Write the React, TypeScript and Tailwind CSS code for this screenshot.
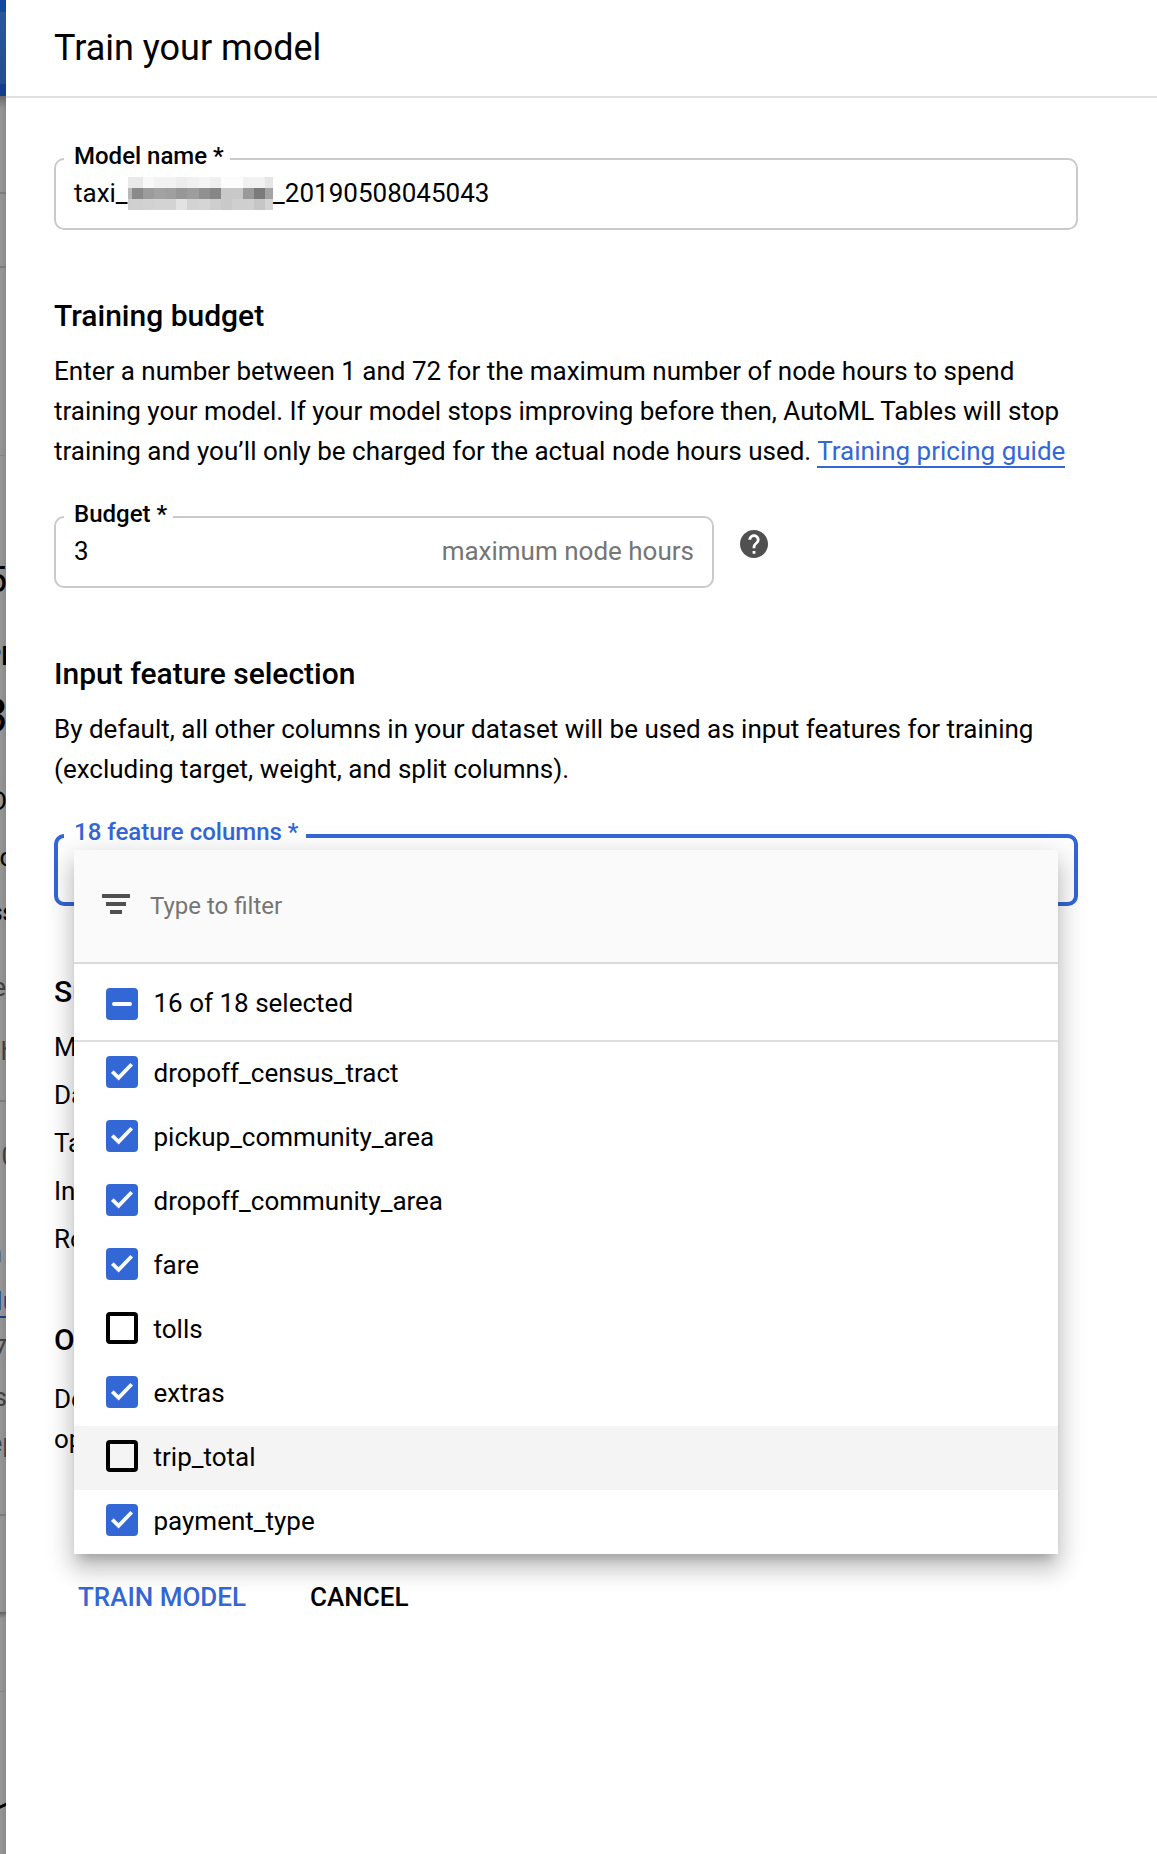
import type { ReactNode } from "react";

const features = [
  { name: "dropoff_census_tract", checked: true },
  { name: "pickup_community_area", checked: true },
  { name: "dropoff_community_area", checked: true },
  { name: "fare", checked: true },
  { name: "tolls", checked: false },
  { name: "extras", checked: true },
  { name: "trip_total", checked: false, hover: true },
  { name: "payment_type", checked: true },
];

const mosaicWidths = [4, 11, 11, 11, 11, 11, 12, 11, 11, 11, 11, 11, 11, 8];
const mosaic = [
  ["e9", "e9", "f8", "f2", "f2", "ec", "f0", "f4", "ef", "fc", "fc", "f1", "f1", "e6"],
  ["b8", "8a", "9b", "a2", "9f", "97", "9d", "90", "86", "c8", "c8", "9a", "7b", "a3"],
  ["cf", "d0", "d2", "d3", "d3", "e2", "d3", "d5", "ce", "c9", "cf", "cf", "c6", "d4"],
];

// Pieces of the dimmed page that stay visible left of the panel.
const glyphs = [
  { t: "5", right: -1, base: 592, cls: "text-[36px]" },
  { t: "Pl", right: -2, base: 665, cls: "text-[26px] font-medium" },
  { t: "3", right: -2, base: 732, cls: "text-[48px]" },
  { t: "D", right: -1, base: 810, cls: "text-[26px]" },
  { t: "c", right: -7, base: 866, cls: "text-[26px]" },
  { t: "ss", right: -10, base: 921, cls: "text-[26px] font-medium" },
  { t: "e", right: 0, base: 996, cls: "text-[26px] text-[#404040]" },
  { t: "h", right: -9, base: 1060, cls: "text-[26px] text-[#404040]" },
  { t: "0", right: -10, base: 1165, cls: "text-[26px] text-[#404040]" },
  { t: "n", right: 4, base: 1262, cls: "text-[26px] text-[#404040]" },
  { t: "lu", right: -11, base: 1310, cls: "text-[26px] text-[#1e3f85]" },
  { t: "7", right: -1, base: 1358, cls: "text-[26px] text-[#404040]" },
  { t: "s", right: -1, base: 1406, cls: "text-[26px] text-[#404040]" },
  { t: "ep", right: -11, base: 1452, cls: "text-[26px] text-[#404040]" },
];

function PageSliver() {
  return (
    <div className="relative w-[6px] shrink-0 overflow-hidden bg-linear-to-r from-[#969696] to-[#8a8a8a]">
      <div className="h-3 bg-[#0f4a9c]" />
      <div className="h-[72px] bg-linear-to-b from-[#28579a] to-[#254f8c]" />
      <div className="h-3 bg-[#123f88]" />
      <div className="h-3 bg-linear-to-b from-[#686868] to-[#909090]/0" />
      <div className="mt-[84px] h-[2px] bg-[#7c7c7c]" />
      <div className="mt-[72px] h-[2px] bg-[#7c7c7c]" />
      <div className="mt-[187px] h-px bg-[#858585]" />
      <div className="mt-[644px] h-[2px] bg-[#7c7c7c]" />
      <div className="mt-[214px] h-[2px] bg-[#1e3f85]" />
      <div className="mt-[196px] h-[2px] bg-[#7c7c7c]" />
      <div className="mt-[96px] h-[6px] bg-linear-to-b from-[#606060] to-[#909090]" />
      <div className="mt-[73px] h-px bg-[#858585]" />
      <svg className="mt-[110px] h-[8px] w-[6px]" viewBox="0 0 6 8">
        <path d="M-1 5.5 7 2" stroke="#000" strokeWidth="3" />
      </svg>
      {glyphs.map((g) => (
        <span
          key={g.base}
          className={"absolute leading-none whitespace-nowrap " + g.cls}
          style={{ right: g.right, bottom: 1854 - g.base, transform: "translateY(16%)" }}
        >
          {g.t}
        </span>
      ))}
    </div>
  );
}

function Label({ children, className }: { children: ReactNode; className: string }) {
  return (
    <span className={"absolute left-[10px] z-10 h-7 bg-white pl-[10px] text-[24px] leading-7 font-medium whitespace-nowrap " + className}>
      {children}
    </span>
  );
}

function Checkbox({ state }: { state: "on" | "off" | "mixed" }) {
  if (state === "off") return <span className="size-8 shrink-0 rounded-[4px] border-4 border-black" />;
  return (
    <svg className="size-8 shrink-0 rounded-[4px] bg-[#3367d6]" viewBox="0 0 32 32" fill="none" stroke="#fafafa">
      {state === "on" ? (
        <path d="M6.3 15.7 12.6 21.8 25.7 8.2" strokeWidth="3.8" />
      ) : (
        <path d="M8 16H24" strokeWidth="4" strokeLinecap="round" />
      )}
    </svg>
  );
}

function FeatureMenu() {
  return (
    <div className="absolute top-3 left-4 z-20 h-[704px] w-[984px] bg-white shadow-[0_10px_10px_-6px_rgba(0,0,0,0.2),0_16px_20px_2px_rgba(0,0,0,0.14),0_6px_28px_4px_rgba(0,0,0,0.12)]">
      <div className="flex h-[114px] items-start border-b-2 border-[#dadada] bg-[#fafafa] pl-7">
        <svg className="mt-11 h-5 w-7" viewBox="0 0 28 20" fill="#505050">
          <path d="M0 0h28v4H0zM4 8h20v4H4zM8 16h12v4H8z" />
        </svg>
        <span className="mt-[42px] ml-5 text-[24px] leading-7 text-[#757575]">Type to filter</span>
      </div>
      <div className="flex h-[78px] border-b-2 border-[#dfdfdf] pt-6 pl-8">
        <Checkbox state="mixed" />
        <span className="-mt-[5px] ml-[15.5px] leading-10">16 of 18 selected</span>
      </div>
      {features.map((f) => (
        <div key={f.name} className={"flex h-16 pt-[14px] pl-8 " + (f.hover ? "bg-[#f4f4f4]" : "")}>
          <Checkbox state={f.checked ? "on" : "off"} />
          <span className="-mt-[3px] ml-[15.5px] leading-10">{f.name}</span>
        </div>
      ))}
    </div>
  );
}

function Heading({ children, className }: { children: ReactNode; className: string }) {
  return <h2 className={"h-10 text-[30px] leading-10 font-medium " + className}>{children}</h2>;
}

export default function App() {
  return (
    <div className="flex h-[1854px] w-[1157px] overflow-hidden bg-white font-[Roboto,sans-serif] text-[26px] text-black">
      <PageSliver />
      <main className="flex-1">
        <header className="h-[98px] border-b-2 border-[#e0e0e0] pt-7 pl-12">
          <h1 className="text-[36px] leading-10">Train your model</h1>
        </header>
        <div className="w-[1072px] pt-[60px] pl-12">
          <div className="relative flex h-[72px] rounded-[10px] border-2 border-[#cacaca] pt-[13px] pl-[18px] leading-10">
            <Label className="-top-[18px] -ml-[2px] w-[166px]">Model name *</Label>
            <span>taxi_</span>
            <div className="mt-1 mr-[0.5px] flex h-[33px] w-[145px] shrink-0 flex-col">
              {mosaic.map((row, r) => (
                <div key={r} className="flex h-[11px]">
                  {row.map((v, i) => (
                    <span key={i} style={{ width: mosaicWidths[i], backgroundColor: "#" + v + v + v }} />
                  ))}
                </div>
              ))}
            </div>
            <span>_20190508045043</span>
          </div>

          <Heading className="mt-[66px]">Training budget</Heading>
          <p className="mt-[15px] leading-10 whitespace-nowrap">
            Enter a number between 1 and 72 for the maximum number of node hours to spend
            <br />
            training your model. If your model stops improving before then, AutoML Tables will stop
            <br />
            training and you’ll only be charged for the actual node hours used.{" "}
            <a className="border-b-2 border-[#3367d6] text-[#3367d6]">Training pricing guide</a>
          </p>
          <div className="mt-[45px] flex">
            <div className="relative flex h-[72px] w-[660px] justify-between rounded-[10px] border-2 border-[#cacaca] pt-[13px] pr-[18px] pl-[18px] leading-10">
              <Label className="-top-[18px] -ml-[2px] w-[109px]">Budget *</Label>
              <span>3</span>
              <span className="text-[#757575]">maximum node hours</span>
            </div>
            <svg className="mt-[14px] ml-[26px] size-7" viewBox="2 2 20 20" fill="#505050">
              <path d="M12 2C6.48 2 2 6.48 2 12s4.48 10 10 10 10-4.48 10-10S17.52 2 12 2zm1 17h-2v-2h2v2zm2.07-7.75l-.9.92C13.45 12.9 13 13.5 13 15h-2v-.5c0-1.1.45-2.1 1.17-2.83l1.24-1.26c.37-.36.59-.86.59-1.41 0-1.1-.9-2-2-2s-2 .9-2 2H8c0-2.21 1.79-4 4-4s4 1.79 4 4c0 .88-.36 1.68-.93 2.25z" />
            </svg>
          </div>

          <Heading className="mt-[66px]">Input feature selection</Heading>
          <p className="mt-[15px] leading-10 whitespace-nowrap">
            By default, all other columns in your dataset will be used as input features for training
            <br />
            (excluding target, weight, and split columns).
          </p>
          <div className="relative mt-[45px] h-[72px] rounded-[10px] border-4 border-[#3367d6]">
            <Label className="-top-5 -ml-1 w-[242px] text-[#3367d6]">18 feature columns *</Label>
            <FeatureMenu />
          </div>

          <Heading className="mt-[66px]">Su</Heading>
          <div className="mt-[11px] leading-[48px]">
            <div>M</div>
            <div>Da</div>
            <div>Ta</div>
            <div>In</div>
            <div>Ro</div>
          </div>
          <Heading className="mt-[57px]">O</Heading>
          <p className="mt-[19px] leading-10 whitespace-nowrap">
            De
            <br />
            op
          </p>
          <div className="mt-[118px] flex gap-16 pl-6 leading-10 font-medium">
            <button className="text-[#3367d6]">TRAIN MODEL</button>
            <button>CANCEL</button>
          </div>
        </div>
      </main>
    </div>
  );
}
